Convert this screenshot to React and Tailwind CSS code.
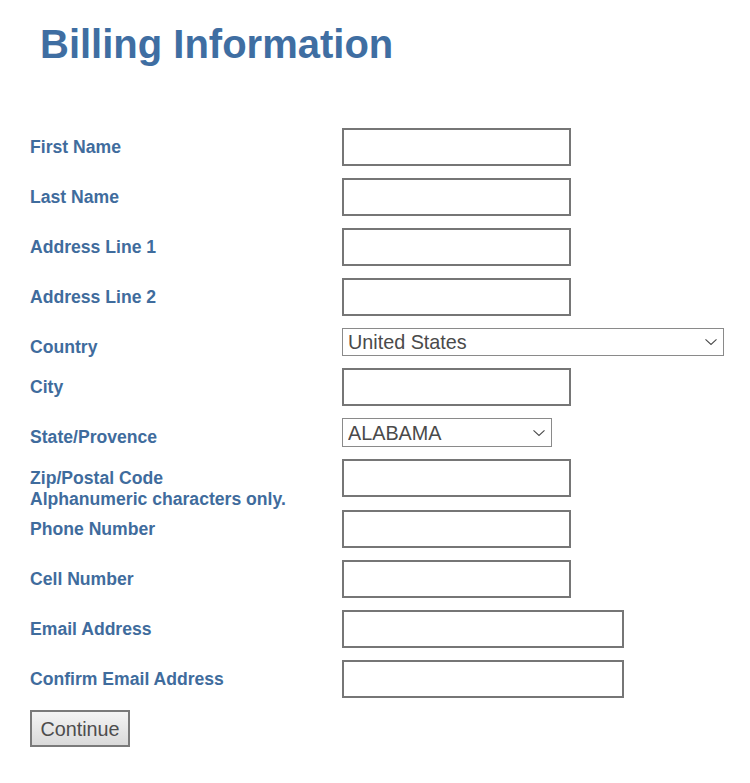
const fields = [
  { label: "First Name", width: "w-[229px]" },
  { label: "Last Name", width: "w-[229px]" },
  { label: "Address Line 1", width: "w-[229px]" },
  { label: "Address Line 2", width: "w-[229px]" },
];

const contactFields = [
  { label: "Phone Number", width: "w-[229px]" },
  { label: "Cell Number", width: "w-[229px]" },
  { label: "Email Address", width: "w-[282px]" },
  { label: "Confirm Email Address", width: "w-[282px]" },
];

function Chevron() {
  return (
    <svg
      width="12"
      height="7"
      viewBox="0 0 12 7"
      className="pointer-events-none absolute right-[7px] top-1/2 -translate-y-1/2"
    >
      <polyline
        points="0.5,0.8 6,6 11.5,0.8"
        fill="none"
        stroke="#4a4a4a"
        strokeWidth="1.1"
      />
    </svg>
  );
}

function Label({ children, className = "" }) {
  return (
    <div
      className={`w-[312px] shrink-0 text-[17.6px] font-bold leading-[21px] text-[#3f6c9d] ${className}`}
    >
      {children}
    </div>
  );
}

function TextRow({ label, width }) {
  return (
    <div className="flex items-center">
      <Label>{label}</Label>
      <input
        type="text"
        className={`h-[38px] ${width} border-2 border-[#767676] bg-white outline-none`}
      />
    </div>
  );
}

function SelectRow({ label, value, width, height }) {
  return (
    <div className="flex items-center">
      {/* label sits a little lower than the select's middle */}
      <Label className="translate-y-[5px]">{label}</Label>
      <div className={`relative ${width}`}>
        <select
          defaultValue={value}
          className={`${height} w-full appearance-none border border-[#8a8a8a] bg-white pl-[5px] text-[19.8px] leading-[24px] text-[#4a4a4a] outline-none`}
        >
          <option>{value}</option>
        </select>
        <Chevron />
      </div>
    </div>
  );
}

export default function App() {
  return (
    <div className="min-h-[783px] w-[750px] bg-white font-['Liberation_Sans',Arial,sans-serif]">
      <h1 className="pl-[40px] pt-[21px] text-[40px] font-bold leading-[46px] text-[#3f6ea2]">
        Billing Information
      </h1>

      <form className="mt-[61px] flex flex-col gap-3 pl-[30px]">
        {fields.map((f) => (
          <TextRow key={f.label} {...f} />
        ))}

        <SelectRow
          label="Country"
          value="United States"
          width="w-[382px]"
          height="h-[28px]"
        />

        <TextRow label="City" width="w-[229px]" />

        <SelectRow
          label="State/Provence"
          value="ALABAMA"
          width="w-[210px]"
          height="h-[29px]"
        />

        <div className="mb-px flex h-[38px] items-start">
          <div className="h-[38px] w-[312px] shrink-0 pt-[9px] text-[17.6px] font-bold leading-[21px] text-[#3f6c9d]">
            Zip/Postal Code
            <br />
            Alphanumeric characters only.
          </div>
          <input
            type="text"
            className="h-[38px] w-[229px] border-2 border-[#767676] bg-white outline-none"
          />
        </div>

        {contactFields.map((f) => (
          <TextRow key={f.label} {...f} />
        ))}

        <div>
          <button
            type="button"
            className="h-[37px] w-[100px] border-2 border-[#7a7a7a] bg-gradient-to-b from-[#f4f4f4] to-[#dadada] text-[19.8px] leading-[24px] text-[#4d4d4d]"
          >
            Continue
          </button>
        </div>
      </form>
    </div>
  );
}
